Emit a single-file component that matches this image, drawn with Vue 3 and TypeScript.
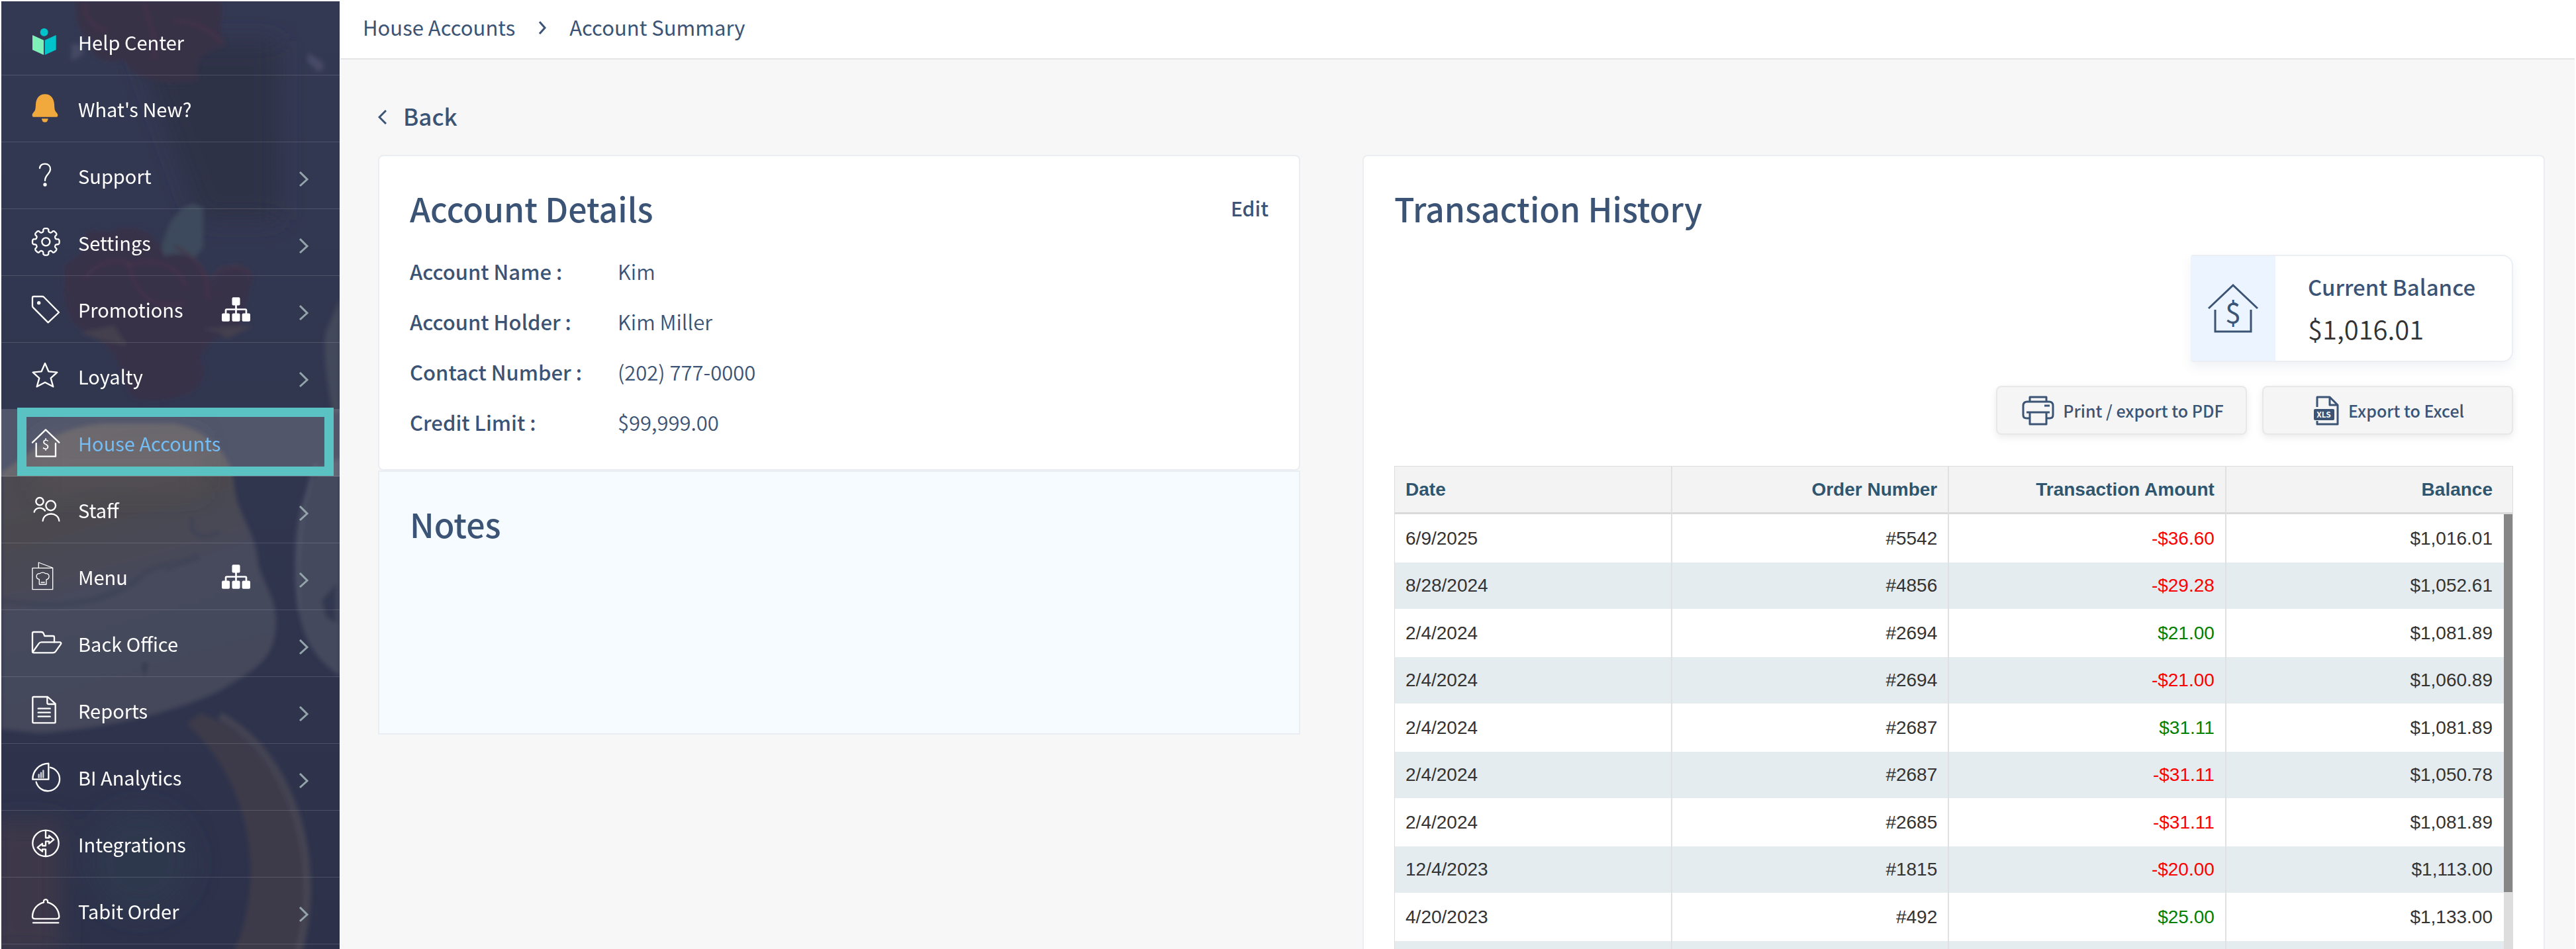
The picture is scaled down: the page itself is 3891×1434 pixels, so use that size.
<script setup lang="ts">
interface NavItem {
  label: string
  icon: string
  expandable?: boolean
  multiSite?: boolean
  active?: boolean
}

interface Transaction {
  date: string
  order: string
  amount: string
  balance: string
}

// Outline of the settings cog, built from eight evenly spaced teeth.
function gearPath(cx: number, cy: number): string {
  const at = (deg: number, r: number) => {
    const a = (deg * Math.PI) / 180
    return `${(cx + r * Math.cos(a)).toFixed(1)} ${(cy + r * Math.sin(a)).toFixed(1)}`
  }
  let d = ''
  for (let i = 0; i < 8; i++) {
    const t = i * 45
    d += `${i === 0 ? 'M' : 'L'}${at(t - 12, 57)}Q${at(t - 9, 61)} ${at(t - 5, 61)}`
    d += `L${at(t + 5, 61)}Q${at(t + 9, 61)} ${at(t + 12, 57)}`
    d += `Q${at(t + 14, 44)} ${at(t + 22.5, 46)}Q${at(t + 31, 44)} ${at(t + 33, 57)}`
  }
  return d + 'Z'
}

const icons = {
  help: '<g stroke="none"><circle cx="62" cy="26" r="18" fill="#00c4cc"/><path d="M9 39 60 62V129L9 106Z" fill="#7ef0b8"/><path d="M116 39 65 62V129L116 106Z" fill="#00c4cc"/></g>',
  bell: '<g stroke="none" fill="#f1a83c"><path d="M66 4C40 4 26 22 24 50C23 72 22 78 14 86C8 92 8 97 8 101Q8 107 14 107H118Q124 107 124 101C124 96 123 92 117 86C110 78 109 72 108 50C106 22 92 4 66 4Z"/><path d="M51 115H80A14 16 0 0 1 51 115Z"/></g>',
  support: '<path d="M42 36C44 23 54 17 66 17C80 17 90 26 90 41C90 62 66 66 66 92"/><circle cx="66" cy="111" r="8" fill="#fff" stroke="none"/>',
  settings: `<path d="${gearPath(70, 67)}"/><circle cx="70" cy="67" r="18"/>`,
  tag: '<path d="M15 12H54Q58 12 61 15L129 84L80 130L12 62Q9 59 9 55V18Q9 12 15 12Z"/><circle cx="38" cy="41" r="8" fill="#fff" stroke="none"/>',
  star: '<path d="M66 12 82 49 121 53 92 79 103 118 66 98 29 118 40 79 11 53 50 49Z"/>',
  house: '<path d="M9 68 69 10 130 68M26 72V131H114V72"/><text x="69" y="99" font-size="60" text-anchor="middle" fill="#fff" stroke="none">$</text>',
  staff: '<circle cx="42" cy="32" r="17"/><circle cx="92" cy="51" r="22"/><path d="M17 80C24 58 52 56 66 74M56 120C60 78 126 78 130 120"/>',
  menu: '<g stroke-width="4"><path d="M9 31H101V128H9ZM37 31V6L101 30"/><path d="M40 105V82C24 80 22 56 42 56C50 50 62 50 68 56C90 54 88 80 72 84V105ZM48 96H64"/></g>',
  folder: '<path d="M9 106V24Q9 18 15 18H50Q57 18 60 26L64 36H102Q108 36 108 42V64"/><path d="M11 108 38 70Q42 64 50 64H134Q142 66 137 74L114 106Q110 112 102 112H15Q9 112 9 106"/>',
  report: '<path d="M14 9H78L113 40V123Q113 127 109 127H14Q10 127 10 123V13Q10 9 14 9ZM76 10V36Q76 42 82 42H112M35 62H89M35 80H89M35 98H89"/>',
  analytics: '<path d="M10 80A72 72 0 0 1 82 8V80Z"/><path d="M90 26A54 54 0 1 1 26 92"/><path d="M38 71V58M48 71V50M58 71V40" opacity=".8"/>',
  integrations: '<circle cx="69" cy="67" r="59"/><path d="M69 10V42H84V32L106 50L84 68V58H69V76M69 126V94H54V104L32 86L54 68V78H69"/>',
  cloche: '<path d="M9 96C10 60 34 38 60 32C56 14 82 14 78 32C104 38 128 60 130 96Q130 106 118 106H21Q9 106 9 96ZM12 124H127"/>',
}

const nav: NavItem[] = [
  { label: 'Help Center', icon: icons.help },
  { label: "What's New?", icon: icons.bell },
  { label: 'Support', icon: icons.support, expandable: true },
  { label: 'Settings', icon: icons.settings, expandable: true },
  { label: 'Promotions', icon: icons.tag, expandable: true, multiSite: true },
  { label: 'Loyalty', icon: icons.star, expandable: true },
  { label: 'House Accounts', icon: icons.house, active: true },
  { label: 'Staff', icon: icons.staff, expandable: true },
  { label: 'Menu', icon: icons.menu, expandable: true, multiSite: true },
  { label: 'Back Office', icon: icons.folder, expandable: true },
  { label: 'Reports', icon: icons.report, expandable: true },
  { label: 'BI Analytics', icon: icons.analytics, expandable: true },
  { label: 'Integrations', icon: icons.integrations },
  { label: 'Tabit Order', icon: icons.cloche, expandable: true },
]

const details = [
  { label: 'Account Name :', value: 'Kim' },
  { label: 'Account Holder :', value: 'Kim Miller' },
  { label: 'Contact Number :', value: '(202) 777-0000' },
  { label: 'Credit Limit :', value: '$99,999.00' },
]

const transactions: Transaction[] = [
  { date: '6/9/2025', order: '#5542', amount: '-$36.60', balance: '$1,016.01' },
  { date: '8/28/2024', order: '#4856', amount: '-$29.28', balance: '$1,052.61' },
  { date: '2/4/2024', order: '#2694', amount: '$21.00', balance: '$1,081.89' },
  { date: '2/4/2024', order: '#2694', amount: '-$21.00', balance: '$1,060.89' },
  { date: '2/4/2024', order: '#2687', amount: '$31.11', balance: '$1,081.89' },
  { date: '2/4/2024', order: '#2687', amount: '-$31.11', balance: '$1,050.78' },
  { date: '2/4/2024', order: '#2685', amount: '-$31.11', balance: '$1,081.89' },
  { date: '12/4/2023', order: '#1815', amount: '-$20.00', balance: '$1,113.00' },
  { date: '4/20/2023', order: '#492', amount: '$25.00', balance: '$1,133.00' },
  { date: '', order: '', amount: '', balance: '' },
]
</script>

<template>
  <div class="shell">
    <aside class="sidebar">
      <svg class="backdrop" viewBox="0 0 512 1432" preserveAspectRatio="xMinYMin slice" aria-hidden="true">
        <defs>
          <filter id="soft" x="-10%" y="-10%" width="120%" height="120%"><feGaussianBlur stdDeviation="3" /></filter>
          <filter id="softer" x="-50%" y="-50%" width="200%" height="200%"><feGaussianBlur stdDeviation="18" /></filter>
          <linearGradient id="base" x1="0" y1="0" x2="0" y2="1">
            <stop offset="0" stop-color="#343953" />
            <stop offset=".5" stop-color="#31364f" />
            <stop offset="1" stop-color="#2d324a" />
          </linearGradient>
          <linearGradient id="bread" x1="0" y1="0" x2=".25" y2="1">
            <stop offset="0" stop-color="#514e53" />
            <stop offset=".38" stop-color="#4b4a50" />
            <stop offset=".6" stop-color="#46495c" />
            <stop offset="1" stop-color="#45475a" />
          </linearGradient>
        </defs>
        <rect width="512" height="1432" fill="url(#base)" />
        <path d="M200 60H420V330H300Z" fill="#2f3347" filter="url(#softer)" />
        <g filter="url(#soft)">
          <path d="M112 0C112 40 125 55 140 60C130 80 150 96 185 88C200 120 260 130 298 118C290 90 300 76 340 66C320 40 340 20 330 0Z" fill="#373147" />
          <path d="M128 0C122 25 140 40 158 44M215 0C220 30 240 60 230 88M260 30C290 30 310 40 335 62" fill="none" stroke="#433449" stroke-width="5" />
          <path d="M106 64L122 66L124 80L106 90Z" fill="#454a63" />
          <path d="M464 78L486 92V104L478 106L462 90Z" fill="#464a66" />
          <path d="M240 385C246 345 262 312 290 306L305 312V372L280 400Z" fill="#3d4a5b" />
          <path d="M95 400C110 385 125 392 128 350C150 340 160 360 175 344C215 336 240 360 246 385C290 370 312 410 318 425C340 390 375 400 380 415L360 490C340 500 300 520 300 540C320 580 280 610 200 600C180 570 180 520 130 500C90 480 95 440 95 400Z" fill="#383148" />
          <path d="M126 420C140 395 170 388 192 395C200 440 230 470 276 455M190 400C230 385 270 400 278 430M318 420C330 398 360 395 376 412M262 370C300 390 316 420 312 450" fill="none" stroke="#44364a" stroke-width="4" />
          <path d="M120 500L170 490L190 520L150 512ZM300 495L380 490L340 510L330 500Z" fill="#443f4e" />
          <path d="M490 500C485 540 494 580 500 620H512V450Z" fill="#43495a" />
          <path d="M0 712C50 680 80 642 160 638H260C320 650 345 690 350 720C355 780 385 800 388 850C395 880 415 900 415 940C412 1000 380 1010 330 1042C260 1075 160 1098 60 1106L0 1100Z" fill="url(#bread)" />
          <path d="M290 780C280 800 300 820 330 800M250 860C270 840 300 850 290 835M0 905C80 920 160 910 210 870C230 850 250 855 300 840" fill="none" stroke="#3b4055" stroke-width="10" opacity=".45" />
          <path d="M212 1000L216 1024L222 1000Z" fill="#363a50" />
          <path d="M512 690C450 710 440 800 444 880C450 960 470 990 512 1020Z" fill="#45495d" />
          <path d="M476 700C450 760 446 860 450 920" fill="none" stroke="#4e5367" stroke-width="4" />
          <path d="M484 905L506 880V940L490 930Z" fill="#333850" />
          <path d="M300 1076C400 1110 462 1230 462 1340C462 1380 456 1410 448 1440H350C400 1330 380 1180 280 1092Z" fill="#3d3a4a" />
          <path d="M330 1080C420 1130 462 1240 462 1340C462 1380 456 1410 448 1440" fill="none" stroke="#4b4956" stroke-width="12" opacity=".7" />
        </g>
        <g filter="url(#softer)">
          <rect x="-20" y="1240" width="110" height="200" fill="#3c394a" />
          <circle cx="210" cy="1300" r="80" fill="#2f384d" />
          <rect x="60" y="660" width="240" height="80" fill="#545054" opacity=".7" />
        </g>
      </svg>
      <nav class="nav" aria-label="Main">
        <a
          v-for="item in nav"
          :key="item.label"
          href="#"
          class="nav-item"
          :class="{ active: item.active }"
          :aria-current="item.active ? 'page' : undefined"
        >
          <svg class="nav-icon" viewBox="0 0 138 138" aria-hidden="true" v-html="item.icon"></svg>
          <span class="nav-label">{{ item.label }}</span>
          <svg v-if="item.multiSite" class="sites" viewBox="0 0 128 108" aria-hidden="true">
            <g fill="#fff">
              <rect x="46" y="0" width="36" height="36" rx="6" />
              <rect x="0" y="72" width="36" height="36" rx="6" />
              <rect x="46" y="72" width="36" height="36" rx="6" />
              <rect x="91" y="72" width="37" height="36" rx="6" />
            </g>
            <path d="M64 30V76M18 76V58Q18 54 22 54H106Q110 54 110 58V76" fill="none" stroke="#fff" stroke-width="8" />
          </svg>
          <svg v-if="item.expandable" class="chevron" viewBox="0 0 13 23" aria-hidden="true">
            <path d="M1 1 12 12 1 22" />
          </svg>
        </a>
      </nav>
    </aside>

    <div class="page">
      <header class="topbar">
        <a href="#">House Accounts</a>
        <svg class="crumb-arrow" viewBox="0 0 12 20" aria-hidden="true"><path d="M2 1 10 10 2 19" /></svg>
        <a href="#">Account Summary</a>
      </header>

      <main class="content">
        <a href="#" class="back">
          <svg viewBox="0 0 13 22" aria-hidden="true"><path d="M12 1 2 11 12 21" /></svg>
          <span>Back</span>
        </a>

        <div class="columns">
          <div class="left">
            <section class="card details">
              <div class="card-head">
                <h2>Account Details</h2>
                <button type="button" class="edit">Edit</button>
              </div>
              <dl>
                <template v-for="row in details" :key="row.label">
                  <dt>{{ row.label }}</dt>
                  <dd>{{ row.value }}</dd>
                </template>
              </dl>
            </section>
            <section class="card notes">
              <h2>Notes</h2>
            </section>
          </div>

          <section class="card history">
            <h2>Transaction History</h2>
            <div class="balance">
              <div class="balance-tile">
                <svg viewBox="0 0 78 74" aria-hidden="true">
                  <path d="M2 37 39 2 76 37M12 39V72H66V39" />
                  <text x="39" y="59" font-size="43" text-anchor="middle">$</text>
                </svg>
              </div>
              <div class="balance-text">
                <span class="balance-label">Current Balance</span>
                <span class="balance-value">$1,016.01</span>
              </div>
            </div>
            <div class="actions">
              <button type="button" class="action">
                <svg class="printer" viewBox="0 0 48 44" aria-hidden="true">
                  <path d="M12 9V2H37V9M11 34H7Q2 34 2 29V15Q2 9 8 9H41Q47 9 47 15V29Q47 34 42 34H38M7 25H42M12 26V43H37V26M34 15H42" />
                </svg>
                <span>Print / export to PDF</span>
              </button>
              <button type="button" class="action">
                <svg class="excel" viewBox="0 0 38 44" aria-hidden="true">
                  <path d="M5 17V2H24L36 14V43H5V38M24 2V14H36" />
                  <rect x="0" y="20" width="31" height="17" rx="2" />
                  <text x="15" y="33" font-size="12" font-weight="700" text-anchor="middle">XLS</text>
                </svg>
                <span>Export to Excel</span>
              </button>
            </div>
            <div class="grid">
              <table>
                <thead>
                  <tr>
                    <th scope="col">Date</th>
                    <th scope="col">Order Number</th>
                    <th scope="col">Transaction Amount</th>
                    <th scope="col">Balance</th>
                  </tr>
                </thead>
                <tbody>
                  <tr v-for="(t, i) in transactions" :key="i">
                    <td>{{ t.date }}</td>
                    <td>{{ t.order }}</td>
                    <td :class="t.amount.startsWith('-') ? 'debit' : 'credit'">{{ t.amount }}</td>
                    <td>{{ t.balance }}</td>
                  </tr>
                </tbody>
              </table>
              <div class="scrollbar" aria-hidden="true"><div class="thumb"></div></div>
            </div>
          </section>
        </div>
      </main>
    </div>
  </div>
</template>

<style>
body {
  margin: 0;
  background: #fff;
}
</style>

<style scoped>
* {
  box-sizing: border-box;
}

.shell {
  display: flex;
  height: 100vh;
  padding: 2px 2px 0;
  overflow: hidden;
  font-family: "Noto Sans CJK SC", "Source Sans Pro", sans-serif;
  font-size: 31px;
  color: #3b5475;
}

a {
  color: inherit;
  text-decoration: none;
}

.sidebar {
  position: relative;
  flex: none;
  width: 512px;
  overflow: hidden;
  border-right: 1px solid #fff;
  background: #31364f;
}

.backdrop {
  position: absolute;
  inset: 0;
  width: 100%;
  height: 100%;
}

.nav {
  position: relative;
  padding-top: 11px;
  font-size: 29px;
}

.nav-item {
  position: relative;
  display: flex;
  align-items: center;
  height: 101px;
  padding: 0 48px 0 44px;
  border-bottom: 1px solid rgba(255, 255, 255, 0.14);
  color: #fff;
}

.nav-item.active {
  background: rgba(255, 255, 255, 0.16);
  color: #74bdf5;
}

.nav-item.active::after {
  content: "";
  position: absolute;
  inset: -3px 9px 0 24px;
  border: 14px solid #5bc2c4;
}

.nav-icon {
  width: 46px;
  height: 46px;
  margin-right: 26px;
  overflow: visible;
  fill: none;
  stroke: #fff;
  stroke-width: 7px;
  stroke-linejoin: round;
  stroke-linecap: round;
}

.nav-label {
  flex: 1;
}

.sites {
  width: 43px;
  height: 37px;
  margin-right: 74px;
}

.chevron {
  width: 13px;
  height: 23px;
  margin-top: 10px;
  overflow: visible;
  fill: none;
  stroke: #93a5aa;
  stroke-width: 3px;
}

.page {
  flex: 1;
  min-width: 0;
  display: flex;
  flex-direction: column;
  background: #f7f7f7;
}

.topbar {
  flex: none;
  display: flex;
  align-items: center;
  height: 88px;
  padding: 0 34px 10px;
  gap: 35px;
  border-bottom: 2px solid #e3e5e7;
  background: #fff;
}

.crumb-arrow,
.back svg {
  fill: none;
  stroke: #3b5475;
  stroke-width: 3px;
}

.crumb-arrow {
  width: 12px;
  height: 20px;
  margin-top: 4px;
}

.content {
  flex: 1;
  display: flex;
  flex-direction: column;
  padding: 61px 45px 0 57px;
}

.back {
  display: flex;
  align-items: center;
  align-self: flex-start;
  gap: 25px;
  margin-bottom: 35px;
  font-size: 35px;
  font-weight: 500;
  line-height: 48px;
}

.back svg {
  width: 13px;
  height: 22px;
  margin-top: 4px;
}

.columns {
  flex: 1;
  display: grid;
  grid-template-columns: 39fr 50fr;
  gap: 94px;
}

.card {
  padding: 48px 46px 0;
  border: 2px solid #eaedf1;
  border-radius: 8px;
  background: #fff;
}

.card-head {
  display: flex;
  align-items: center;
  justify-content: space-between;
}

h2 {
  margin: 0;
  font-size: 50px;
  font-weight: 500;
  line-height: 60px;
}

.edit {
  padding: 0;
  border: 0;
  background: none;
  font: 500 30px/60px "Noto Sans CJK SC", "Source Sans Pro", sans-serif;
  color: inherit;
}

.details {
  padding-bottom: 33px;
}

dl {
  display: grid;
  grid-template-columns: 314px 1fr;
  margin: 28px 0 0;
  line-height: 76px;
}

dt {
  font-weight: 500;
}

dd {
  margin: 0;
  font-weight: 350;
}

.notes {
  min-height: 399px;
  border-radius: 0;
  background: #f6fbff;
}

.history {
  display: flex;
  flex-direction: column;
  border-bottom: 0;
}

.balance {
  align-self: flex-end;
  display: flex;
  width: 487px;
  height: 162px;
  margin-top: 41px;
  border: 2px solid #ebeef3;
  border-left: 0;
  border-radius: 4px 16px 16px 4px;
  background: #fff;
  box-shadow: 0 8px 16px rgba(59, 84, 117, 0.08);
}

.balance-tile {
  display: grid;
  place-items: center;
  width: 128px;
  background: #ecf5ff;
}

.balance-tile svg {
  width: 78px;
  height: 74px;
  fill: none;
  stroke: #3b5475;
  stroke-width: 3px;
}

.balance-tile text {
  fill: #3b5475;
  stroke: none;
}

.balance-text {
  display: flex;
  flex-direction: column;
  justify-content: center;
  padding-left: 49px;
}

.balance-label {
  font-size: 33px;
  font-weight: 500;
  line-height: 60px;
}

.balance-value {
  font-size: 40px;
  font-weight: 350;
  line-height: 66px;
  color: #333;
}

.actions {
  display: flex;
  justify-content: flex-end;
  gap: 23px;
  margin-top: 36px;
}

.action {
  display: flex;
  align-items: center;
  justify-content: center;
  gap: 14px;
  width: 379px;
  height: 74px;
  padding: 0 0 0 4px;
  border: 2px solid #e8e8e8;
  border-radius: 8px;
  background: #f5f5f5;
  box-shadow: 0 4px 12px rgba(0, 0, 0, 0.08);
  font: 500 25px/36px "Noto Sans CJK SC", "Source Sans Pro", sans-serif;
  color: #3b5475;
}

.action svg {
  height: 44px;
  overflow: visible;
  fill: none;
  stroke: #3b5475;
  stroke-width: 3px;
  stroke-linejoin: round;
}

.printer {
  width: 48px;
}

.excel {
  width: 38px;
}

.excel rect {
  fill: #3b5475;
  stroke: none;
}

.excel text {
  fill: #fff;
  stroke: none;
}

.grid {
  position: relative;
  margin-top: 47px;
}

table {
  width: 100%;
  table-layout: fixed;
  border-collapse: separate;
  border-spacing: 0;
  border-left: 1px solid #dcdcdc;
  border-right: 1px solid #dcdcdc;
  font-family: "Liberation Sans", Arial, sans-serif;
  font-size: 28px;
  color: #333;
}

th,
td {
  width: 24.8%;
  padding: 0 16px;
  border-right: 2px solid #dfe1e3;
  text-align: right;
}

th:last-child,
td:last-child {
  width: 25.6%;
  padding-right: 30px;
  border-right: 0;
}

th:first-child,
td:first-child {
  text-align: left;
}

th {
  height: 73px;
  border-top: 1px solid #dcdcdc;
  border-bottom: 3px solid #dadada;
  background: #f3f3f3;
  font-weight: 700;
  color: #30566f;
}

td {
  height: 73px;
}

tbody tr:nth-child(even) td {
  height: 70px;
  background: #e5ecf0;
}

.debit {
  color: #f00;
}

.credit {
  color: #008000;
}

.scrollbar {
  position: absolute;
  top: 73px;
  right: 0;
  bottom: 0;
  width: 14px;
  background: #ddd;
}

.thumb {
  width: 13px;
  height: 571px;
  background: #868686;
}
</style>
